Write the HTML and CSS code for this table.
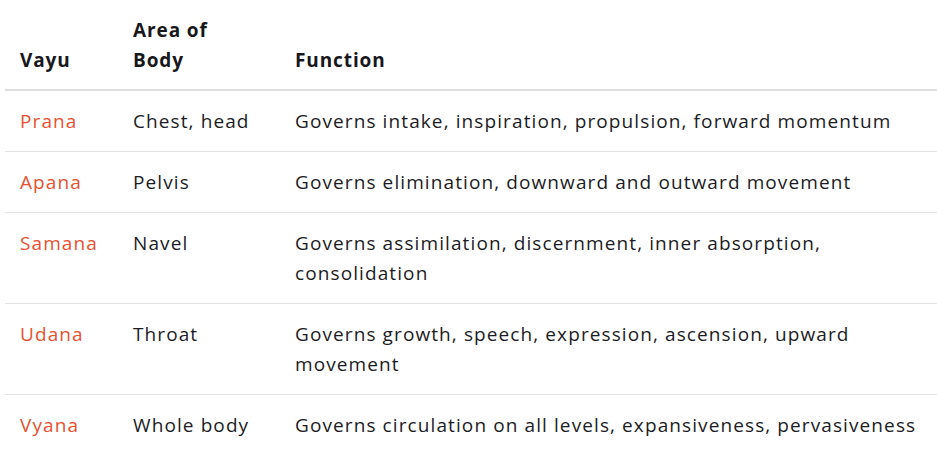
FILE: index.html
```html
<!DOCTYPE html>
<html lang="en">
<head>
<meta charset="utf-8">
<title>Vayus</title>
<link rel="stylesheet" href="styles.css">
</head>
<body>
<table class="vayu-table">
  <colgroup>
    <col class="c1">
    <col class="c2">
    <col class="c3">
  </colgroup>
  <thead>
    <tr>
      <th>Vayu</th>
      <th>Area of<br>Body</th>
      <th>Function</th>
    </tr>
  </thead>
  <tbody>
    <tr>
      <td class="name">Prana</td>
      <td>Chest, head</td>
      <td>Governs intake, inspiration, propulsion, forward momentum</td>
    </tr>
    <tr>
      <td class="name">Apana</td>
      <td>Pelvis</td>
      <td>Governs elimination, downward and outward movement</td>
    </tr>
    <tr>
      <td class="name">Samana</td>
      <td>Navel</td>
      <td>Governs assimilation, discernment, inner absorption,<br>consolidation</td>
    </tr>
    <tr>
      <td class="name">Udana</td>
      <td>Throat</td>
      <td>Governs growth, speech, expression, ascension, upward<br>movement</td>
    </tr>
    <tr class="last">
      <td class="name">Vyana</td>
      <td>Whole body</td>
      <td>Governs circulation on all levels, expansiveness, pervasiveness</td>
    </tr>
  </tbody>
</table>
</body>
</html>
```
FILE: styles.css
```css
html, body {
  margin: 0;
  padding: 0;
  background: #ffffff;
}
body {
  font-family: "Open Sans", "Noto Sans", "Liberation Sans", sans-serif;
  font-size: 19px;
  color: #1c1c24;
}
.vayu-table {
  margin-left: 5px;
  width: 932px;
  border-collapse: collapse;
  table-layout: fixed;
}
.c1 { width: 113px; }
.c2 { width: 162px; }
.vayu-table th,
.vayu-table td {
  text-align: left;
  padding: 15px 15px 15px 15px;
  line-height: 30px;
  letter-spacing: 1.1px;
}
.vayu-table th {
  font-weight: 700;
  vertical-align: bottom;
  padding-top: 15px;
  padding-bottom: 14px;
  border-bottom: 2px solid #dedede;
  color: #17171c;
  letter-spacing: 0.9px;
}
.vayu-table td {
  vertical-align: top;
  border-bottom: 1px solid #e3e3e3;
}
.vayu-table tr.last td {
  border-bottom: none;
}
.vayu-table td.name {
  color: #ea5131;
}
```
